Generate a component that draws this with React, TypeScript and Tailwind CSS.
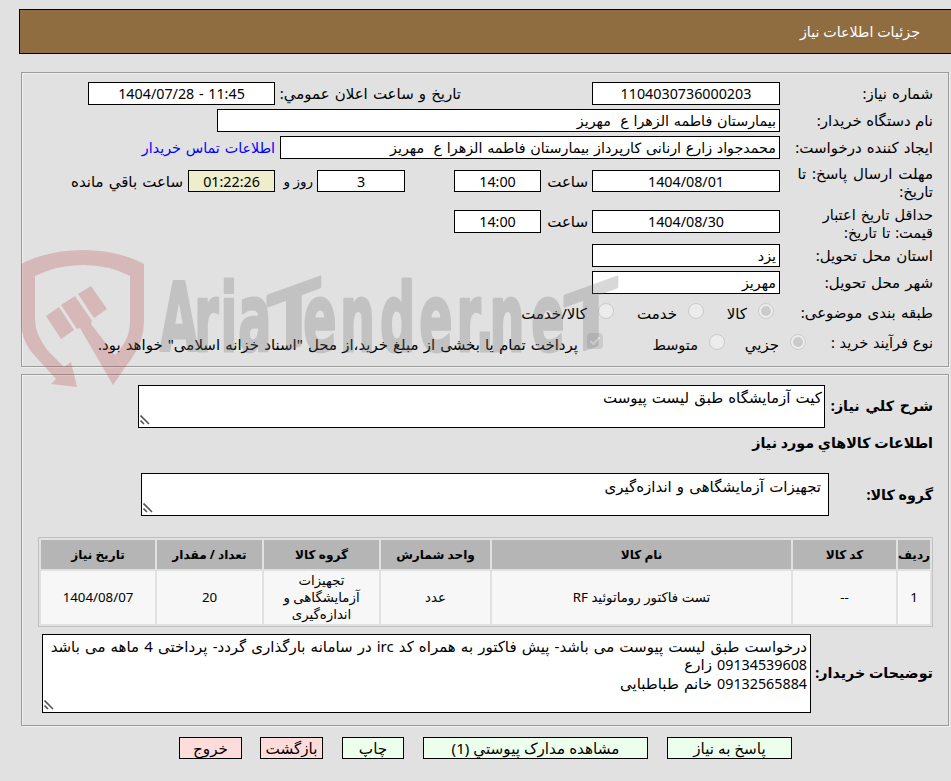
import type { ReactNode } from 'react';
import clsx from 'clsx';

const items = [
  { title: 'ردیف', value: '1' },
  { title: 'کد کالا', value: '--' },
  { title: 'نام کالا', value: 'تست فاکتور روماتوئید RF' },
  { title: 'واحد شمارش', value: 'عدد' },
  { title: 'گروه کالا', value: 'تجهیزات آزمایشگاهی و اندازه‌گیری' },
  { title: 'تعداد / مقدار', value: '20' },
  { title: 'تاریخ نیاز', value: '1404/08/07' },
];

const buttons = [
  { text: 'پاسخ به نیاز', style: 'w-[125px] bg-[#ecffec]' },
  { text: 'مشاهده مدارک پيوستي (1)', style: 'mr-[19px] w-[225px] bg-[#ecffec]' },
  { text: 'چاپ', style: 'mr-[19px] w-[62px] bg-[#ecffec]' },
  { text: 'بازگشت', style: 'mr-[19px] w-[63px] bg-[#ffdcdc]' },
  { text: 'خروج', style: 'mr-[18px] w-[63px] bg-[#ffdcdc]' },
];

const Panel = ({ className, children }: { className: string; children: ReactNode }) => (
  <div
    className={clsx(
      'mr-[2px] w-[928px] border border-[#9b9b9b] pr-[15px] shadow-[inset_1px_1px_0_#f0f0f0,1px_1px_0_#f0f0f0]',
      className,
    )}
  >
    {children}
  </div>
);

const Row = ({ className, children }: { className?: string; children: ReactNode }) => (
  <div className={clsx('flex items-start whitespace-pre text-[15px] leading-[23px] [word-spacing:1.2px]', className)}>
    {children}
  </div>
);

const Label = ({ className = 'w-[153px]', children }: { className?: string; children: ReactNode }) => (
  <div className={clsx('shrink-0', className)}>{children}</div>
);

const Field = ({ className, children }: { className: string; children: ReactNode }) => (
  <div className={clsx('shrink-0 border border-black px-[3px] text-[14.3px] leading-[22px] [word-spacing:1px]', className)}>
    {children}
  </div>
);

const Radio = ({ checked }: { checked?: boolean }) => (
  <span className="mt-[5px] flex size-4 shrink-0 items-center justify-center rounded-full border border-[#cbcbcb] bg-[#ececec]">
    {checked && <span className="size-2.5 rounded-full bg-[#cbcbcb]" />}
  </span>
);

const TextBox = ({ className, children }: { className: string; children: ReactNode }) => (
  <div
    className={clsx(
      'relative shrink-0 whitespace-pre border border-black bg-white text-[15px] leading-[18px] [word-spacing:1.2px]',
      className,
    )}
  >
    {children}
    <svg className="absolute bottom-[2px] left-[1px]" width="10" height="10" stroke="#555" strokeWidth="1.6">
      <path d="M.5 .5 9 9M.5 5.5 4 9" />
    </svg>
  </div>
);

const Watermark = () => (
  <svg className="pointer-events-none absolute top-[240px] left-0" width="640" height="150" direction="ltr">
    <g opacity=".27" fill="#bc4d4d">
      <path d="M21 24Q48 10 83 10T144 24V81Q144 101 132 118L124 129 115 115Q130 100 130 82V36Q109 25 83 25T35 36V80Q35 94 48 111L64 127 71 122 77 147 51 144 56 139 35 116Q21 101 21 81Z" />
      <path d="M46 76 59 67 74 90 61 99ZM61 65 75 56 92 81 91 84 115 115 124 129 113 145 80 88 77 89ZM78 54 91 46 107 69 94 78Z" />
    </g>
    <g
      opacity=".27"
      fill="#727272"
      stroke="#727272"
      strokeWidth="3"
      strokeLinejoin="round"
      fontFamily="'DejaVu Sans Condensed', 'DejaVu Sans', sans-serif"
      fontWeight="700"
    >
      <text transform="translate(0 111) scale(.58 1)" fontSize="94" x="276 335 380 411">
        Aria
      </text>
      <text transform="translate(267 117) skewY(-20)" fontFamily="'Liberation Sans', sans-serif" fontSize="88">
        T
      </text>
      <text transform="translate(0 111) scale(.58 1)" fontSize="94" x="523 586 655 723 787 820 844 916">
        ender.ne
      </text>
      <text transform="translate(564 117) skewY(-20)" fontFamily="'Liberation Sans', sans-serif" fontSize="88">
        T
      </text>
    </g>
  </svg>
);

const App = () => (
  <div
    dir="rtl"
    className="relative h-[781px] w-[951px] overflow-hidden bg-[#e1e1e1] pt-[9px] font-['Noto_Sans','DejaVu_Sans',sans-serif] text-[14.3px] text-black"
  >
    <div className="h-[45px] w-[932px] border border-r-0 border-black bg-[#8f6d40] pr-[31px] leading-[43px] text-white">
      جزئیات اطلاعات نیاز
    </div>

    <Panel className="mt-[18px] h-[295px] pt-[9px]">
      <Row className="h-[27px]">
        <Label>شماره نیاز:</Label>
        <Field className="h-[23px] w-[188px] bg-white text-center">1104030736000203</Field>
        <span className="mr-[131px] w-[181px]">تاریخ و ساعت اعلان عمومي:</span>
        <Field className="mr-[5px] h-[23px] w-[187px] bg-white text-center">
          <bdi dir="ltr">1404/07/28 - 11:45</bdi>
        </Field>
      </Row>
      <Row className="h-[27px]">
        <Label className="w-[153px] [word-spacing:.4px]">نام دستگاه خریدار:</Label>
        <Field className="h-[23px] w-[563px] bg-white">بیمارستان فاطمه الزهرا ع  مهریز</Field>
      </Row>
      <Row className="h-[34px]">
        <Label>ایجاد کننده درخواست:</Label>
        <Field className="h-[23px] w-[500px] bg-white">
          محمدجواد زارع ارنانی کارپرداز بیمارستان فاطمه الزهرا ع  مهریز
        </Field>
        <span className="mr-[5px] text-[14.3px] text-[#0000ff]">اطلاعات تماس خریدار</span>
      </Row>
      <Row className="h-[40px]">
        <Label className="-mt-[6px] w-[153px] leading-[18px] [word-spacing:2px]">{'مهلت ارسال پاسخ: تا\nتاریخ:'}</Label>
        <Field className="h-[22px] w-[188px] bg-white text-center">1404/08/01</Field>
        <span className="mr-[4px] w-[47px]">ساعت</span>
        <Field className="h-[22px] w-[87px] bg-white text-center">14:00</Field>
        <Field className="mr-[49px] h-[22px] w-[88px] bg-white text-center">3</Field>
        <span className="mr-[4px] w-[38px] text-[13.5px] [word-spacing:0px]">روز و</span>
        <Field className="h-[22px] w-[87px] bg-[#eeeecc] text-center">01:22:26</Field>
        <span className="mr-[5px]">ساعت باقي مانده</span>
      </Row>
      <Row className="h-[34px]">
        <Label className="-mt-[5px] w-[153px] text-[14.5px] leading-[18px]">{'حداقل تاریخ اعتبار\nقیمت: تا تاریخ:'}</Label>
        <Field className="h-[23px] w-[188px] bg-white text-center">1404/08/30</Field>
        <span className="mr-[4px] w-[47px]">ساعت</span>
        <Field className="h-[23px] w-[87px] bg-white text-center">14:00</Field>
      </Row>
      <Row className="h-[27px]">
        <Label>استان محل تحویل:</Label>
        <Field className="h-[23px] w-[188px] bg-white">یزد</Field>
      </Row>
      <Row className="h-[27px]">
        <Label>شهر محل تحویل:</Label>
        <Field className="h-[23px] w-[188px] bg-white">مهریز</Field>
      </Row>
      <Row className="h-[31px]">
        <Label className="w-[159px] pt-[3px]">طبقه بندی موضوعی:</Label>
        <Radio checked />
        <span className="mr-[11px] w-[43px] pt-[4px]">کالا</span>
        <Radio />
        <span className="mr-[11px] w-[63px] pt-[4px]">خدمت</span>
        <Radio />
        <span className="mr-[11px] pt-[4px]">کالا/خدمت</span>
      </Row>
      <Row>
        <Label className="w-[127px] pt-[2px] text-[14.6px] [word-spacing:.8px]">نوع فرآیند خرید :</Label>
        <Radio checked />
        <span className="mr-[11px] w-[54px] pt-[4px]">جزیي</span>
        <Radio />
        <span className="mr-[11px] w-[95px] pt-[4px] text-[14.5px]">متوسط</span>
        <span className="mt-[4px] flex size-4 shrink-0 items-center justify-center rounded-sm bg-[#cbcbcb]">
          <svg width="12" height="12" fill="none" stroke="#ececec" strokeWidth="2">
            <path d="M1.5 6 4.5 9 10.5 2.5" />
          </svg>
        </span>
        <span className="mr-[9px] pt-[4px]">پرداخت تمام یا بخشی از مبلغ خرید،از محل "اسناد خزانه اسلامی" خواهد بود.</span>
      </Row>
    </Panel>

    <Panel className="mt-[7px] h-[352px] pt-[10px]">
      <div className="flex h-[43px] items-center">
        <div className="w-[108px] shrink-0 whitespace-nowrap pb-[2px] font-bold [word-spacing:2px]">شرح کلي نیاز:</div>
        <TextBox className="h-[43px] w-[687px] px-[2px] pt-[2px]">کیت آزمایشگاه طبق لیست پیوست</TextBox>
      </div>
      <div className="h-[45px] pt-[3px] font-bold leading-[23px]">اطلاعات کالاهاي مورد نیاز</div>
      <div className="flex h-[43px] items-center">
        <div className="w-[104px] shrink-0 whitespace-nowrap font-bold">گروه کالا:</div>
        <TextBox className="h-[43px] w-[688px] px-[7px] pt-[3px] [word-spacing:0px]">تجهیزات آزمایشگاهی و اندازه‌گیری</TextBox>
      </div>

      <div className="mt-[21px] grid h-[90px] w-[895px] grid-cols-[32px_103px_299px_109px_115px_105px_114px] grid-rows-[29px_53px] gap-[2px] border border-[#c0c0c0] p-[2px] text-center text-[13.3px] leading-[17px]">
        {items.map(({ title }) => (
          <div key={title} className="flex items-center justify-center whitespace-nowrap bg-[#b5b5b5] text-[12.1px] font-bold">
            {title}
          </div>
        ))}
        {items.map(({ title, value }) => (
          <div key={title} className="flex items-center justify-center bg-[#f7f7f7] px-[14px]">
            {value}
          </div>
        ))}
      </div>

      <div className="mt-[7px] flex h-[79px] items-center">
        <div className="w-[122px] shrink-0 whitespace-nowrap pb-[2px] font-bold">توضیحات خریدار:</div>
        <TextBox className="h-[79px] w-[769px] px-[3px] pt-[2px]">
          <p>درخواست طبق لیست پیوست می باشد- پیش فاکتور به همراه کد irc در سامانه بارگذاری گردد- پرداختی 4 ماهه می باشد</p>
          <p>
            <span className="text-[14.3px]">09134539608</span> زارع
          </p>
          <p>
            <span className="text-[14.3px]">09132565884</span> خانم طباطبایی
          </p>
        </TextBox>
      </div>
    </Panel>

    <div className="mt-[11px] mr-[159px] flex text-[15.2px] [word-spacing:3px]">
      {buttons.map(({ text, style }) => (
        <button key={text} className={clsx('h-[22px] whitespace-nowrap border border-black leading-[20px]', style)}>
          {text}
        </button>
      ))}
    </div>

    <Watermark />
  </div>
);

export default App;
